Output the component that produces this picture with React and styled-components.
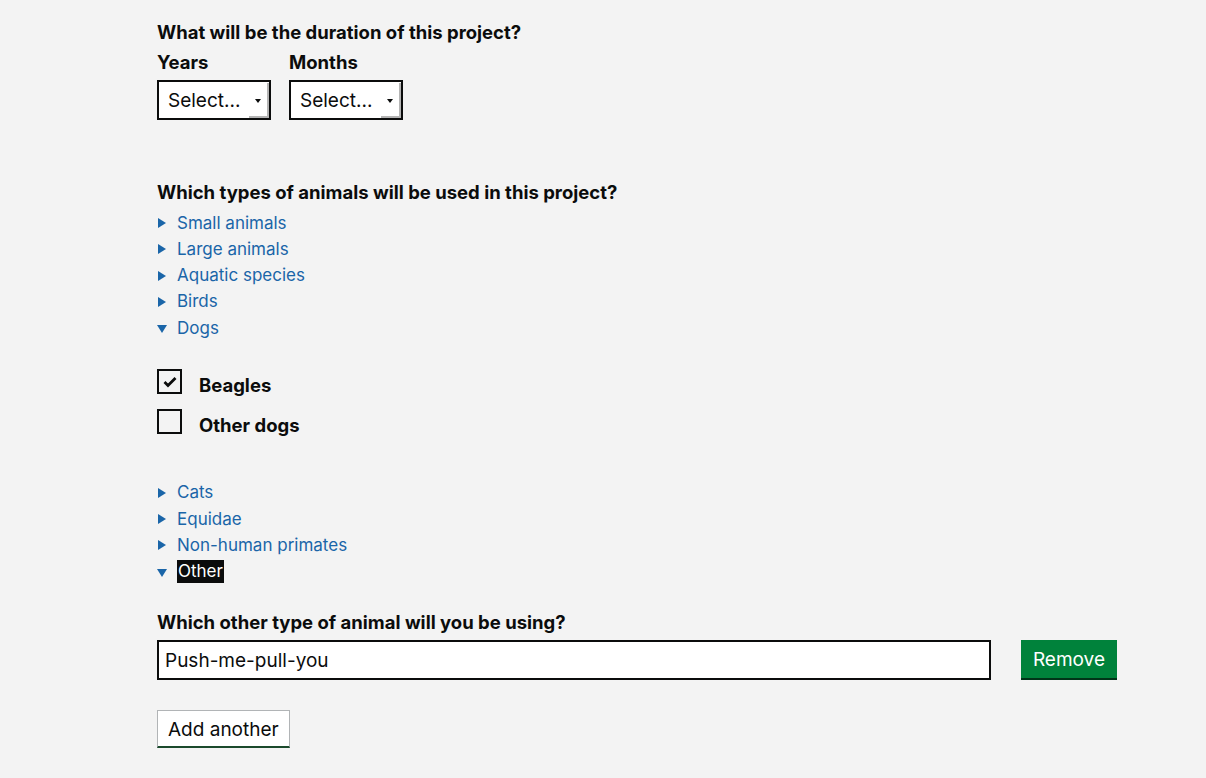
import React, { useState } from "react";
import styled, { createGlobalStyle } from "styled-components";

const GlobalStyle = createGlobalStyle`
  html, body {
    margin: 0;
    background: #f3f3f3;
  }
  body {
    font-family: Inter, "Noto Sans", "Liberation Sans", sans-serif;
    color: #0b0c0c;
  }
`;

const Page = styled.main`
  padding: 20px 0 30px 157px;
  width: 960px;
`;

const Heading = styled.h2`
  margin: 0 0 ${(p) => p.gap || 6}px;
  font-size: 18.5px;
  line-height: 24px;
  font-weight: 700;
`;

const DateRow = styled.div`
  display: flex;
  gap: 18px;
`;

const Field = styled.div`
  display: flex;
  flex-direction: column;
  gap: 6px;
`;

const Label = styled.label`
  font-size: 18.5px;
  line-height: 24px;
  font-weight: 700;
`;

const SelectWrap = styled.div`
  position: relative;
  width: 114px;
  height: 40px;
`;

const Select = styled.select`
  appearance: none;
  -webkit-appearance: none;
  height: 40px;
  width: 100%;
  box-sizing: border-box;
  border: 2px solid #0b0c0c;
  background: #fff;
  padding: 0 0 0 9px;
  font: inherit;
  font-size: 19px;
  color: #0b0c0c;
  border-radius: 0;
  outline: none;
`;

/* the little drop-down button drawn over the right end of the select */
const DropButton = styled.span`
  position: absolute;
  top: 3px;
  right: 2px;
  bottom: 2px;
  width: 20px;
  box-sizing: border-box;
  border-right: 2px solid #b5b5b5;
  border-bottom: 2px solid #b5b5b5;
  display: flex;
  align-items: center;
  justify-content: center;
  pointer-events: none;

  &::after {
    content: "";
    width: 0;
    height: 0;
    margin: 2px 0 0 -1px;
    border-style: solid;
    border-width: 4px 3px 0 3px;
    border-color: #0b0c0c transparent transparent transparent;
  }
`;

const Section = styled.section`
  margin-top: ${(p) => p.top || 0}px;
`;

const List = styled.ul`
  list-style: none;
  margin: 0;
  padding: 0;
`;

const Summary = styled.li`
  display: flex;
  align-items: center;
  height: 26.25px;
  font-size: 17px;
  color: #1a65a8;
  cursor: pointer;
`;

const Arrow = styled.span`
  width: 0;
  height: 0;
  margin: 0 11px 0 1px;
  border-style: solid;
  border-color: transparent;
  ${(p) =>
    p.open
      ? `border-width: 8px 5px 0 5px; border-top-color: #1a65a8; margin: 2px 10px 0 0;`
      : `border-width: 5px 0 5px 8px; border-left-color: #1a65a8;`}
`;

const SummaryText = styled.span`
  line-height: 23px;
  padding: 0 ${(p) => (p.focused ? "1px" : "0")};
  background: ${(p) => (p.focused ? "#0b0c0c" : "transparent")};
  color: ${(p) => (p.focused ? "#fff" : "inherit")};
`;

const Checks = styled.div`
  margin: 28px 0 30.5px;
`;

const CheckRow = styled.label`
  display: flex;
  align-items: flex-start;
  height: 40px;
  cursor: pointer;
`;

const Box = styled.span`
  width: 25px;
  height: 25px;
  box-sizing: border-box;
  border: 2px solid #0b0c0c;
  background: transparent;
  display: flex;
  align-items: center;
  justify-content: center;
  flex-shrink: 0;
`;

const CheckLabel = styled.span`
  margin-left: 17px;
  padding-top: 4px;
  font-size: 18.5px;
  line-height: 24px;
  font-weight: 700;
`;

const InputRow = styled.div`
  display: flex;
  align-items: flex-start;
  gap: 30px;
`;

const TextInput = styled.input`
  width: 834px;
  height: 40px;
  box-sizing: border-box;
  border: 2px solid #0b0c0c;
  border-radius: 0;
  padding: 0 6px;
  font: inherit;
  font-size: 19px;
  color: #0b0c0c;
  background: #fff;
  outline: none;
`;

const Button = styled.button`
  box-sizing: border-box;
  font: inherit;
  font-size: 19px;
  line-height: 24px;
  border-radius: 0;
  cursor: pointer;
  padding: ${(p) => (p.secondary ? "7px 10px 4px" : "8px 12px 6px")};
  color: ${(p) => (p.secondary ? "#0b0c0c" : "#fff")};
  background: ${(p) => (p.secondary ? "#fff" : "#00823b")};
  border: ${(p) => (p.secondary ? "1px solid #b1b4b6" : "none")};
  border-bottom: ${(p) => (p.secondary ? "2px solid #1b4a2c" : "none")};
  box-shadow: ${(p) => (p.secondary ? "none" : "0 2px 0 #003418")};
`;

const ButtonWrap = styled.div`
  margin-top: 30px;
`;

const Tick = () => (
  <svg width="16" height="13" viewBox="0 0 16 13">
    <path d="M2.5 7 L6 10.5 L13.5 3" fill="none" stroke="#0b0c0c" strokeWidth="2.8" />
  </svg>
);

const Item = ({ label, open, focused }) => (
  <Summary>
    <Arrow open={open} />
    <SummaryText focused={focused}>{label}</SummaryText>
  </Summary>
);

const Check = ({ label, checked }) => (
  <CheckRow>
    <Box>{checked && <Tick />}</Box>
    <CheckLabel>{label}</CheckLabel>
  </CheckRow>
);

const DurationSelect = () => (
  <SelectWrap>
    <Select defaultValue="">
      <option value="">Select...</option>
    </Select>
    <DropButton />
  </SelectWrap>
);

export default function App() {
  const [other, setOther] = useState("Push-me-pull-you");

  return (
    <>
      <GlobalStyle />
      <Page>
        <Heading>What will be the duration of this project?</Heading>
        <DateRow>
          <Field>
            <Label>Years</Label>
            <DurationSelect />
          </Field>
          <Field>
            <Label>Months</Label>
            <DurationSelect />
          </Field>
        </DateRow>

        <Section top={60}>
          <Heading gap={6}>Which types of animals will be used in this project?</Heading>
          <List>
            <Item label="Small animals" />
            <Item label="Large animals" />
            <Item label="Aquatic species" />
            <Item label="Birds" />
            <Item label="Dogs" open />
          </List>
          <Checks>
            <Check label="Beagles" checked />
            <Check label="Other dogs" />
          </Checks>
          <List>
            <Item label="Cats" />
            <Item label="Equidae" />
            <Item label="Non-human primates" />
            <Item label="Other" open focused />
          </List>
        </Section>

        <Section top={25.5}>
          <Heading>Which other type of animal will you be using?</Heading>
          <InputRow>
            <TextInput value={other} onChange={(e) => setOther(e.target.value)} />
            <Button>Remove</Button>
          </InputRow>
          <ButtonWrap>
            <Button secondary>Add another</Button>
          </ButtonWrap>
        </Section>
      </Page>
    </>
  );
}
